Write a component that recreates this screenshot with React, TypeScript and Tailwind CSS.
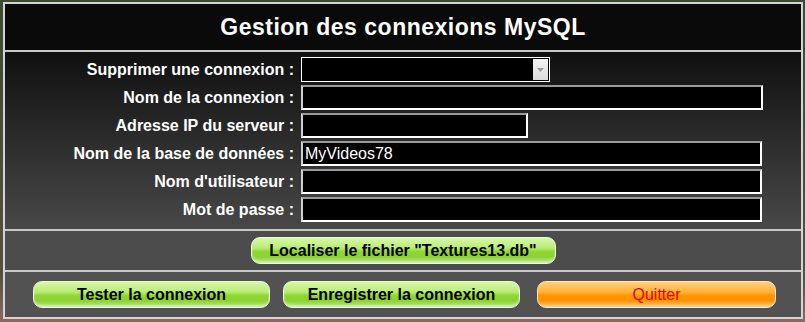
import React from "react";

const FONT = { fontFamily: '"Liberation Sans", Arial, sans-serif' };

const FIELDS: { label: string; width: string; value?: string }[] = [
  { label: "Nom de la connexion :", width: "w-[462px]" },
  { label: "Adresse IP du serveur :", width: "w-[227px]" },
  { label: "Nom de la base de données :", width: "w-[461px]", value: "MyVideos78" },
  { label: "Nom d'utilisateur :", width: "w-[461px]" },
  { label: "Mot de passe :", width: "w-[461px]" },
];

function Label({ children }: { children: React.ReactNode }) {
  return (
    <div className="w-[289px] shrink-0 text-right text-[16px] font-bold text-white">
      {children}
    </div>
  );
}

function GreenButton({ children, className }: { children: React.ReactNode; className: string }) {
  return (
    <button
      className={
        "h-[27px] rounded-[9px] border border-[#eef8dc] bg-[linear-gradient(to_bottom,#d8f7ac_0%,#b8ec74_40%,#8fd535_55%,#8cd230_75%,#b8ec80_100%)] text-[16px] font-bold leading-none text-black shadow-[inset_0_-2px_2px_rgba(255,255,255,0.35)] " +
        className
      }
    >
      {children}
    </button>
  );
}

export default function App() {
  return (
    <div
      className="h-[322px] w-[805px] bg-[linear-gradient(to_bottom,#3d4a2e,#55503d_85%,#8a6a60)] pl-[3px] pr-[2px] pt-[2px]"
      style={FONT}
    >
      <div className="flex h-[317px] flex-col border-2 border-[#d4d4d4] bg-[#0a0a0a]">
        <div className="flex h-[46px] items-center justify-center text-[23px] font-bold tracking-[0.5px] text-white">
          Gestion des connexions MySQL
        </div>

        <div className="flex flex-col gap-[3px] border-t-2 border-[#c8c8c8] bg-[linear-gradient(to_bottom,#101010,#484848)] pb-[7px] pt-[5px]">
          <div className="flex h-[25px] items-center gap-[7px]">
            <Label>Supprimer une connexion :</Label>
            <div className="flex h-[25px] w-[249px] items-stretch border border-white bg-black p-[1px]">
              <div className="flex-1" />
              <div className="flex w-[15px] items-center justify-center bg-[linear-gradient(to_bottom,#f2f2f2,#dcdcdc)]">
                <svg width="7" height="4" viewBox="0 0 7 4">
                  <path d="M0 0h7L3.5 4z" fill="#9a9a9a" />
                </svg>
              </div>
            </div>
          </div>
          {FIELDS.map((f) => (
            <div key={f.label} className="flex h-[25px] items-center gap-[7px]">
              <Label>{f.label}</Label>
              <div
                className={
                  "flex h-[25px] items-center border-2 border-b-white border-l-[#cfcfcf] border-r-white border-t-[#9a9a9a] bg-black px-[2px] text-[16px] text-white " +
                  f.width
                }
              >
                {f.value}
              </div>
            </div>
          ))}
        </div>

        <div className="flex h-[41px] items-center justify-center border-t-2 border-[#c8c8c8] bg-[#4c4c4c]">
          <GreenButton className="w-[305px]">Localiser le fichier "Textures13.db"</GreenButton>
        </div>

        <div className="flex flex-1 items-center border-t-2 border-[#c8c8c8] bg-[#525252] pl-[28px]">
          <GreenButton className="w-[237px]">Tester la connexion</GreenButton>
          <GreenButton className="ml-[13px] w-[237px]">Enregistrer la connexion</GreenButton>
          <button className="ml-[17px] h-[27px] w-[239px] rounded-[9px] border border-[#fde7c4] bg-[linear-gradient(to_bottom,#ffd085_0%,#ffb238_40%,#ff9500_55%,#ff9300_75%,#ffd08c_100%)] text-[16px] leading-none text-[#e60000]">
            Quitter
          </button>
        </div>
      </div>
    </div>
  );
}
